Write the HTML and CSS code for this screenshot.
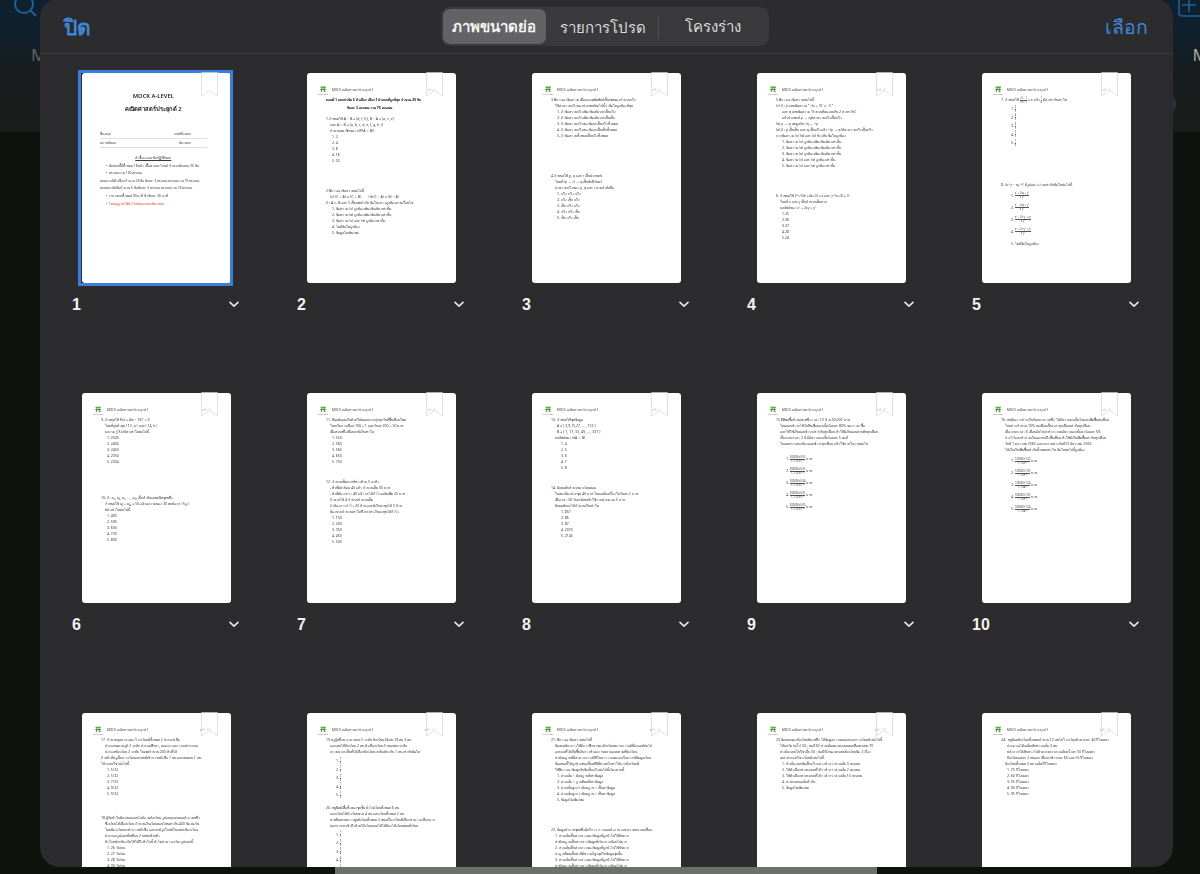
FILE: index.html
```html
<!DOCTYPE html>
<html lang="th">
<head>
    <meta charset="UTF-8">
    <meta name="viewport" content="width=device-width, initial-scale=1.0">
    <title>ภาพขนาดย่อ</title>
    <link rel="stylesheet" href="styles.css">
</head>
<body>
    <svg class="sprites" width="0" height="0">
        <symbol id="ribbon" viewBox="0 0 17 25"><path d="M0.5 0.5H16.5V24L8.5 18.5L0.5 24Z" fill="#fff" fill-opacity="0.55" stroke="#d4d4d4" stroke-width="0.7"/></symbol>
        <symbol id="logo" viewBox="0 0 12 8"><path d="M3 1.2H9.5M5 1.2L4 6.8M7.4 1.2V6.2L9 6.8M2.6 4H9.6" fill="none" stroke="#4e9a3a" stroke-width="1.3"/></symbol>
        <symbol id="chev" viewBox="0 0 10 7"><path d="M1 1.4L5 5.2L9 1.4" fill="none" stroke="#e8e8e8" stroke-width="1.6" stroke-linecap="round" stroke-linejoin="round"/></symbol>
    </svg>

    <div class="backdrop">
        <div class="back-top">
            <div class="back-icons">
                <svg class="back-search" width="40" height="20" viewBox="0 0 40 20"><circle cx="24" cy="4" r="9" fill="none" stroke="#1f5f94" stroke-width="2"/><path d="M30.5 10.5L36 16" stroke="#1f5f94" stroke-width="2"/></svg>
                <svg class="back-plus" width="22" height="20" viewBox="0 0 22 20"><rect x="1" y="-8" width="30" height="24" rx="3" fill="none" stroke="#1f5f94" stroke-width="1.6"/><path d="M11 -2V12M4 5H18" stroke="#1f5f94" stroke-width="1.6"/></svg>
            </div>
            <div class="back-tabs">
                <span class="back-m">M</span>
                <span class="back-m">M</span>
            </div>
        </div>
        <div class="back-bar"></div>
    </div>
    <div class="back-dot"></div>

    <div class="modal">
        <header class="modal-head">
            <a class="head-link head-link-left">ปิด</a>
            <div class="segments">
                <span class="seg seg-on">ภาพขนาดย่อ</span>
                <span class="seg seg-mid">รายการโปรด</span>
                <span class="seg seg-last">โครงร่าง</span>
            </div>
            <a class="head-link head-link-right">เลือก</a>
        </header>

        <div class="grid">
            <div class="cell">
                <div class="page page-first selected">
                    <svg class="ribbon"><use href="#ribbon"/></svg>
                    <div class="cover-title">MOCK A-LEVEL</div>
                    <div class="cover-title">คณิตศาสตร์ประยุกต์ 2</div>
                    <div class="form-line mt-14"><span>ชื่อ-สกุล</span><span>เลขที่นั่งสอบ</span></div>
                    <div class="form-line"><span>สถานที่สอบ</span><span>ห้องสอบ</span></div>
                    <div class="cover-note mt-6">คำชี้แจงและข้อปฏิบัติสอบ</div>
                    <div class="cover-ln in2">•&nbsp; ข้อสอบนี้มีทั้งหมด 18 หน้า เนื้อหาและโจทย์ จำนวนข้อสอบ 30 ข้อ</div>
                    <div class="cover-ln in2">•&nbsp; คะแนนรวม 100 คะแนน</div>
                    <div class="cover-ln">ตอนแรกมีตัวเลือกจำนวน 25 ข้อ ข้อละ 3 คะแนน คะแนนรวม 75 คะแนน</div>
                    <div class="cover-ln">ตอนสองอัตนัยจำนวน 5 ข้อ ข้อละ 5 คะแนน คะแนนรวม 25 คะแนน</div>
                    <div class="cover-ln in2">•&nbsp; เวลาสอบทั้งหมด 90 นาที ทำข้อละ 30 นาที</div>
                    <div class="cover-ln in2 red">•&nbsp; ไม่อนุญาตให้นำโจทย์ออกนอกห้องสอบ</div>
                </div>
                <div class="cell-foot"><span>1</span><svg class="chev"><use href="#chev"/></svg></div>
            </div>

            <div class="cell">
                <div class="page">
                    <svg class="ribbon"><use href="#ribbon"/></svg>
                    <div class="page-head"><div class="logo-box"><svg class="logo"><use href="#logo"/></svg><span class="logo-cap">MATH TALENT</span></div><span>MOCK คณิตศาสตร์ประยุกต์ 2</span><span class="pno">หน้า 1</span></div>
                    <div class="ln strong">ตอนที่ 1 แบบปรนัย 5 ตัวเลือก เลือก 1 คำตอบที่ถูกที่สุด จำนวน 25 ข้อ</div>
                    <div class="ln strong in4 mt-2">ข้อละ 3 คะแนน รวม 75 คะแนน</div>
                    <div class="ln mt-5">1.กำหนดให้ A − B = {d, f, h}, B − A = {a, c, e}</div>
                    <div class="ln in1">และ A ∩ B = {a, b, c, d, e, f, g, h, i}</div>
                    <div class="ln in1">จำนวนสมาชิกของ n(P(A ∩ B))</div>
                    <div class="ln in2">1. 2</div><div class="ln in2">2. 4</div><div class="ln in2">3. 8</div><div class="ln in2">4. 16</div><div class="ln in2">5. 32</div>
                    <div class="ln mt-24">2.พิจารณาข้อความต่อไปนี้</div>
                    <div class="ln in1">(ก) (C ∩ A) ∪ (C ∩ B)&nbsp;&nbsp;&nbsp;&nbsp;&nbsp;&nbsp;&nbsp;&nbsp;(ข) (C − A) ∪ (B − A)</div>
                    <div class="ln">ถ้า A ⊂ B และ C เป็นเซตจำกัด ข้อใดกล่าวถูกต้องตามเงื่อนไข</div>
                    <div class="ln in2">1. ข้อความ (ก) ถูกต้องเพียงข้อเดียวเท่านั้น</div>
                    <div class="ln in2">2. ข้อความ (ข) ถูกต้องเพียงข้อเดียวเท่านั้น</div>
                    <div class="ln in2">3. ข้อความ (ก) และ (ข) ถูกต้องเท่านั้น</div>
                    <div class="ln in2">4. ไม่มีข้อใดถูกต้อง</div>
                    <div class="ln in2">5. ข้อมูลไม่เพียงพอ</div>
                </div>
                <div class="cell-foot"><span>2</span><svg class="chev"><use href="#chev"/></svg></div>
            </div>

            <div class="cell">
                <div class="page">
                    <svg class="ribbon"><use href="#ribbon"/></svg>
                    <div class="page-head"><div class="logo-box"><svg class="logo"><use href="#logo"/></svg><span class="logo-cap">MATH TALENT</span></div><span>MOCK คณิตศาสตร์ประยุกต์ 2</span><span class="pno">หน้า 2</span></div>
                    <div class="ln">3.พิจารณาข้อความ เมื่อเอกภพสัมพัทธ์เป็นเซตของจำนวนจริง</div>
                    <div class="ln in1">ให้ค่าความจริงของประพจน์ต่อไปนี้ว่าข้อใดถูกต้องที่สุด</div>
                    <div class="ln in2">1. ถ้าข้อความจริงเพียงข้อเดียวจะเป็นจริง</div>
                    <div class="ln in2">2. ถ้าข้อความจริงเพียงข้อเดียวจะเป็นเท็จ</div>
                    <div class="ln in2">3. ถ้าข้อความจริงสองข้อจะเป็นจริงทั้งหมด</div>
                    <div class="ln in2">4. ถ้าข้อความจริงสองข้อจะเป็นเท็จทั้งหมด</div>
                    <div class="ln in2">5. ถ้าข้อความทั้งหมดเป็นจริงทั้งหมด</div>
                    <div class="ln mt-34">4.กำหนดให้ p, q และ r เป็นประพจน์</div>
                    <div class="ln in1">โดยที่ (p → r) ↔ q เป็นสัจนิรันดร์</div>
                    <div class="ln in1">ค่าความจริงของ p, q และ r ตามลำดับคือ</div>
                    <div class="ln in2">1. จริง จริง จริง</div><div class="ln in2">2. จริง เท็จ จริง</div><div class="ln in2">3. เท็จ จริง จริง</div><div class="ln in2">4. จริง จริง เท็จ</div><div class="ln in2">5. เท็จ จริง เท็จ</div>
                </div>
                <div class="cell-foot"><span>3</span><svg class="chev"><use href="#chev"/></svg></div>
            </div>

            <div class="cell">
                <div class="page">
                    <svg class="ribbon"><use href="#ribbon"/></svg>
                    <div class="page-head"><div class="logo-box"><svg class="logo"><use href="#logo"/></svg><span class="logo-cap">MATH TALENT</span></div><span>MOCK คณิตศาสตร์ประยุกต์ 2</span><span class="pno">หน้า 3</span></div>
                    <div class="ln">5.พิจารณาข้อความต่อไปนี้</div>
                    <div class="ln">(ก) ถ้า p แทนข้อความ “ √(x + 3)² = −3 ”</div>
                    <div class="ln in2">และ q แทนข้อความ “จำนวนที่สองลบกัน 2 ค่าเท่ากัน”</div>
                    <div class="ln in2">แล้วประพจน์ p → q มีค่าความจริงเป็นจริง</div>
                    <div class="ln">(ข) p ↔ q สมมูลกับ ~q ↔ ~p</div>
                    <div class="ln">(ค) ถ้า p เป็นเท็จ และ q เป็นจริงแล้ว ~(p → q) มีค่าความจริงเป็นจริง</div>
                    <div class="ln">จากข้อความ (ก) (ข) และ (ค) ข้างต้น ข้อใดถูกต้อง</div>
                    <div class="ln in2">1. ข้อความ (ก) ถูกต้องเพียงข้อเดียวเท่านั้น</div>
                    <div class="ln in2">2. ข้อความ (ข) ถูกต้องเพียงข้อเดียวเท่านั้น</div>
                    <div class="ln in2">3. ข้อความ (ค) ถูกต้องเพียงข้อเดียวเท่านั้น</div>
                    <div class="ln in2">4. ข้อความ (ก) และ (ข) ถูกต้องเท่านั้น</div>
                    <div class="ln in2">5. ข้อความ (ก) และ (ค) ถูกต้องเท่านั้น</div>
                    <div class="ln mt-24">6. กำหนดให้ 2^√(3x²+4x+3) = x และ y^(x+3) = 3³</div>
                    <div class="ln in1">โดยที่ x และ y เป็นจำนวนเต็มบวก</div>
                    <div class="ln in1">ผลลัพธ์ของ x² + 2xy + y²</div>
                    <div class="ln in2">1.25</div><div class="ln in2">2.36</div><div class="ln in2">3.37</div><div class="ln in2">4.28</div><div class="ln in2">5.24</div>
                </div>
                <div class="cell-foot"><span>4</span><svg class="chev"><use href="#chev"/></svg></div>
            </div>

            <div class="cell">
                <div class="page">
                    <svg class="ribbon"><use href="#ribbon"/></svg>
                    <div class="page-head"><div class="logo-box"><svg class="logo"><use href="#logo"/></svg><span class="logo-cap">MATH TALENT</span></div><span>MOCK คณิตศาสตร์ประยุกต์ 2</span><span class="pno">หน้า 4</span></div>
                    <div class="ln">7. กำหนดให้ <span class="frac"><span>√3 − 1</span><span>√3 + 1</span></span> = a แล้ว <span class="frac"><span>1</span><span>a</span></span> มีค่าเท่ากับเท่าใด</div>
                    <div class="ln-frac in3 mt-2">1. <span class="frac"><span>2</span><span>3</span></span></div>
                    <div class="ln-frac in3">2. <span class="frac"><span>4</span><span>5</span></span></div>
                    <div class="ln-frac in3">3. <span class="frac"><span>3</span><span>5</span></span></div>
                    <div class="ln-frac in3">4. <span class="frac"><span>2</span><span>5</span></span></div>
                    <div class="ln-frac in3">5. <span class="frac"><span>1</span><span>3</span></span></div>
                    <div class="ln mt-34">8. (x⁻¹y − xy⁻¹)² มีรูปอย่างง่ายเท่ากับข้อใดต่อไปนี้</div>
                    <div class="ln-sum in3 mt-2">1. <span class="frac"><span>x² + 2xy + y²</span><span>x²y²</span></span></div>
                    <div class="ln-sum in3">2. <span class="frac"><span>x² − 2xy + y²</span><span>x²y²</span></span></div>
                    <div class="ln-sum in3">3. <span class="frac"><span>x⁴ − 2x²y² + y⁴</span><span>x²y²</span></span></div>
                    <div class="ln-sum in3">4. <span class="frac"><span>x⁴ + 2x²y² + y⁴</span><span>x²y²</span></span></div>
                    <div class="ln-sum in3">5. ไม่มีข้อใดถูกต้อง</div>
                </div>
                <div class="cell-foot"><span>5</span><svg class="chev"><use href="#chev"/></svg></div>
            </div>

            <div class="cell">
                <div class="page">
                    <svg class="ribbon"><use href="#ribbon"/></svg>
                    <div class="page-head"><div class="logo-box"><svg class="logo"><use href="#logo"/></svg><span class="logo-cap">MATH TALENT</span></div><span>MOCK คณิตศาสตร์ประยุกต์ 2</span><span class="pno">หน้า 5</span></div>
                    <div class="ln">9. กำหนดให้ f(x) = 4(x − 16)² + 9</div>
                    <div class="ln in1">โดยที่จุดต่ำสุด ( 12, a ) และ ( 14, b )</div>
                    <div class="ln in1">ผลรวม ∑f(x) มีค่าเท่าใดต่อไปนี้</div>
                    <div class="ln in2">1. 2500</div><div class="ln in2">2. 2400</div><div class="ln in2">3. 2450</div><div class="ln in2">4. 2350</div><div class="ln in2">5. 2304</div>
                    <div class="ln mt-30">10. ถ้า a₁, a₂, a₃, ... , a₂₅ เป็นลำดับเลขคณิตชุดหนึ่ง</div>
                    <div class="ln in1">กำหนดให้ a₂ + a₂₄ = 50 แล้วผลรวมของ 30 พจน์แรก ( S₃₀ )</div>
                    <div class="ln in1">มีค่าเท่าใดต่อไปนี้</div>
                    <div class="ln in2">1. 495</div><div class="ln in2">2. 590</div><div class="ln in2">3. 690</div><div class="ln in2">4. 720</div><div class="ln in2">5. 800</div>
                </div>
                <div class="cell-foot"><span>6</span><svg class="chev"><use href="#chev"/></svg></div>
            </div>

            <div class="cell">
                <div class="page">
                    <svg class="ribbon"><use href="#ribbon"/></svg>
                    <div class="page-head"><div class="logo-box"><svg class="logo"><use href="#logo"/></svg><span class="logo-cap">MATH TALENT</span></div><span>MOCK คณิตศาสตร์ประยุกต์ 2</span><span class="pno">หน้า 6</span></div>
                    <div class="ln">11. นิมนต์ออมเงินด้วยวิธีหยอดกระปุกทุกวันที่ขึ้นเดือนใหม่</div>
                    <div class="ln in1">โดยเริ่มจากเดือน 100 + 1 และวันละ 200 + 50 บาท</div>
                    <div class="ln in1">เมื่อครบหนึ่งเดือนจะมีเงินเท่าใด</div>
                    <div class="ln in2">1. 550</div><div class="ln in2">2. 560</div><div class="ln in2">3. 560</div><div class="ln in2">4. 650</div><div class="ln in2">5. 750</div>
                    <div class="ln mt-14">12. จำนวนเต็มบวกที่หารด้วย 3 ลงตัว</div>
                    <div class="ln in1">- ตัวที่มีค่าน้อย 40 แล้ว จำนวนเต็ม 30 บาท</div>
                    <div class="ln in1">- ตัวที่มีมากกว่า 40 แล้ว จะได้กำไรเฉลี่ยเพิ่ม 20 บาท</div>
                    <div class="ln in1">ถ้าขายได้ 4 จำนวนจำนวนเต็ม</div>
                    <div class="ln in1">ถ้าต้องการกำไร 20 ล้าน และมีเงินลงทุนได้ 3 ล้าน</div>
                    <div class="ln in1">ต้องขายจำนวนเท่าใดจึงจะเท่าเงินลงทุนได้กำไร</div>
                    <div class="ln in2">1. 150</div><div class="ln in2">2. 200</div><div class="ln in2">3. 350</div><div class="ln in2">4. 450</div><div class="ln in2">5. 500</div>
                </div>
                <div class="cell-foot"><span>7</span><svg class="chev"><use href="#chev"/></svg></div>
            </div>

            <div class="cell">
                <div class="page">
                    <svg class="ribbon"><use href="#ribbon"/></svg>
                    <div class="page-head"><div class="logo-box"><svg class="logo"><use href="#logo"/></svg><span class="logo-cap">MATH TALENT</span></div><span>MOCK คณิตศาสตร์ประยุกต์ 2</span><span class="pno">หน้า 7</span></div>
                    <div class="ln">13. กำหนดให้ชุดข้อมูล</div>
                    <div class="ln in2">A = { 3,9,15,27, ... , 153 }</div>
                    <div class="ln in2">B = { 1, 17, 33, 49, ... , 337 }</div>
                    <div class="ln in1">ผลลัพธ์ของ n(A ∩ B)</div>
                    <div class="ln in3">1. 4</div><div class="ln in3">2. 5</div><div class="ln in3">3. 6</div><div class="ln in3">4. 7</div><div class="ln in3">5. 8</div>
                    <div class="ln mt-14">14. มัธยมต้นจำนวนมาเรียนคอม</div>
                    <div class="ln in1">ในสองห้องประชุม 40 บาท โดยเฉลี่ยเครื่องในวันละ 2 บาท</div>
                    <div class="ln in1">เมื่อเวลา 30 วันจะมีคนเข้าใช้งานประมาณ 5 บาท</div>
                    <div class="ln in1">มัธยมต้นจะได้จำนวนเงินเท่าใด</div>
                    <div class="ln in3">1. 857</div><div class="ln in3">2. 86</div><div class="ln in3">3. 87</div><div class="ln in3">4. 2070</div><div class="ln in3">5. 2145</div>
                </div>
                <div class="cell-foot"><span>8</span><svg class="chev"><use href="#chev"/></svg></div>
            </div>

            <div class="cell">
                <div class="page">
                    <svg class="ribbon"><use href="#ribbon"/></svg>
                    <div class="page-head"><div class="logo-box"><svg class="logo"><use href="#logo"/></svg><span class="logo-cap">MATH TALENT</span></div><span>MOCK คณิตศาสตร์ประยุกต์ 2</span><span class="pno">หน้า 8</span></div>
                    <div class="ln">15.นิติพลซื้อบ้านแห่งหนึ่งราคา 10 ล้าน 50,000 บาท</div>
                    <div class="ln in1">โดยผ่อนชำระได้รับสินเชื่อดอกเบี้ยร้อยละ 80% ของราคาซื้อ</div>
                    <div class="ln in1">และให้ใช้เงินผ่อนชำระเท่าๆกันทุกเดือน ทำให้มีเงินผ่อนส่วนต้นทุกเดือน</div>
                    <div class="ln in1">เป็นระยะเวลา 2 ปี มีอัตราดอกเบี้ยร้อยละ 5 ต่อปี</div>
                    <div class="ln in1">ในแต่ละงวดจะต้องผ่อนชำระทุกเดือน แล้วใช้จ่ายในงวดต่อไป</div>
                    <div class="ln-sum in3 mt-6">1. <span class="frac"><span>500000×0.05</span><span>1−1.0125⁻²⁴</span></span> บาท</div>
                    <div class="ln-sum in3">2. <span class="frac"><span>500000×0.05</span><span>1−1.0125⁻²⁴</span></span> บาท</div>
                    <div class="ln-sum in3">3. <span class="frac"><span>500000×0.04</span><span>1−1.0125⁻²⁴</span></span> บาท</div>
                    <div class="ln-sum in3">4. <span class="frac"><span>500000×0.05</span><span>1−1.0125⁻¹²</span></span> บาท</div>
                    <div class="ln-sum in3">5. <span class="frac"><span>500000×0.05</span><span>1−1.0125⁻¹²</span></span> บาท</div>
                </div>
                <div class="cell-foot"><span>9</span><svg class="chev"><use href="#chev"/></svg></div>
            </div>

            <div class="cell">
                <div class="page">
                    <svg class="ribbon"><use href="#ribbon"/></svg>
                    <div class="page-head"><div class="logo-box"><svg class="logo"><use href="#logo"/></svg><span class="logo-cap">MATH TALENT</span></div><span>MOCK คณิตศาสตร์ประยุกต์ 2</span><span class="pno">หน้า 9</span></div>
                    <div class="ln">16. หนมันเงาะฝากเงินกับธนาคารหนึ่ง ได้อัตราดอกเบี้ยร้อยละเพิ่มขึ้นต่อเดือน</div>
                    <div class="ln in1">โดยฝากจำนวน 10% ต่อเดือนเป็นเวลาทุกเดือนเท่ากันทุกเดือน</div>
                    <div class="ln in1">เมื่อระยะเวลา 6 เดือนถัดไปจะทำการลดอัตราดอกเบี้ยลงร้อยละ 5%</div>
                    <div class="ln in1">ฝากไว้และทำจ่ายเงินออกจนถึงสิ้นเดือน ทำให้มีเงินเพิ่มขึ้นเท่ากันทุกเดือน</div>
                    <div class="ln in1">วันที่ 1 มกราคม 2563 และจะจ่ายต่างกันที่ 31 ธันวาคม 2563</div>
                    <div class="ln in1">ได้เงินเงินเพิ่มขึ้นเท่ากันทั้งหมดเท่าใด ข้อใดต่อไปนี้ถูกต้อง</div>
                    <div class="ln-sum in3 mt-2">1. <span class="frac"><span>120000×1.05</span><span>1−1.05⁻¹²</span></span> บาท</div>
                    <div class="ln-sum in3">2. <span class="frac"><span>120000×1.05</span><span>1−1.05⁻¹²</span></span> บาท</div>
                    <div class="ln-sum in3">3. <span class="frac"><span>120000×1.04</span><span>1−1.04⁻¹²</span></span> บาท</div>
                    <div class="ln-sum in3">4. <span class="frac"><span>100000×1.05</span><span>1−1.05⁻¹²</span></span> บาท</div>
                    <div class="ln-sum in3">5. <span class="frac"><span>100000×1.04</span><span>1−1.04⁻¹²</span></span> บาท</div>
                </div>
                <div class="cell-foot"><span>10</span><svg class="chev"><use href="#chev"/></svg></div>
            </div>

            <div class="cell">
                <div class="page">
                    <svg class="ribbon"><use href="#ribbon"/></svg>
                    <div class="page-head"><div class="logo-box"><svg class="logo"><use href="#logo"/></svg><span class="logo-cap">MATH TALENT</span></div><span>MOCK คณิตศาสตร์ประยุกต์ 2</span><span class="pno">หน้า 10</span></div>
                    <div class="ln">17. จำนวนบุคลากรของโรงเรียนมีทั้งหมด 2 ประเภท คือ</div>
                    <div class="ln in1">ประเภทของครูมี 2 ระดับ ประถมศึกษา, คณะกรรมการ ผลประกอบ</div>
                    <div class="ln in1">ประเภทนักเรียน 2 ระดับ ในเขตจำนวน 200 ตัวที่ได้</div>
                    <div class="ln">ถ้าหน้าที่ครูเป็นการเรียนและคนที่เข้าจากหนังสือ 1 คน และคนสอน 1 คน</div>
                    <div class="ln">ได้ระบบวิชาต่อไปนี้</div>
                    <div class="ln in2">1. 5/32</div><div class="ln in2">2. 5/32</div><div class="ln in2">3. 7/32</div><div class="ln in2">4. 9/32</div><div class="ln in2">5. 9/32</div>
                    <div class="ln mt-18">18.ผู้จัดทำในห้องสอบออนไลน์ถามนักเรียน รูปแบบและตอบคำถามหนึ่ง</div>
                    <div class="ln in1">ซึ่งเรียนได้เลือกเรียน จำนวนเงินเรียนตอนไหนเท่ากัน 400 ข้อ ต่อวัน</div>
                    <div class="ln in1">โดยห้องเรียนจะทำการหนังสือ และจะมีรูปโจทย์ในแต่ละห้องเรียน</div>
                    <div class="ln in1">ประกอบรูปแบบที่เหมือน 2 บทต่อหัวหน้า</div>
                    <div class="ln in1">ตัวโจทย์จะต้องจัดให้ได้ถึงหัวใจนี้ ทำไม่สามารถเรียงรูปแบบนี้</div>
                    <div class="ln in2">1. 26 วัน/บน</div><div class="ln in2">2. 27 วัน/บน</div><div class="ln in2">3. 28 วัน/บน</div><div class="ln in2">4. 30 วัน/บน</div>
                </div>
                <div class="cell-foot"><span>11</span><svg class="chev"><use href="#chev"/></svg></div>
            </div>

            <div class="cell">
                <div class="page">
                    <svg class="ribbon"><use href="#ribbon"/></svg>
                    <div class="page-head"><div class="logo-box"><svg class="logo"><use href="#logo"/></svg><span class="logo-cap">MATH TALENT</span></div><span>MOCK คณิตศาสตร์ประยุกต์ 2</span><span class="pno">หน้า 11</span></div>
                    <div class="ln">19.ครูผู้หนึ่งมาเวลาสอน 3 ระดับ นักเรียน 34 คน 56 คน 3 คน</div>
                    <div class="ln in1">ออกเล่นได้นักเรียน 2 คน ตัวเลือกเรียน 3 คนแต่ละระดับ</div>
                    <div class="ln in1">ความน่าจะเป็นที่ได้เลือกนักเรียนระดับเดียวกัน 1 คน เท่ากับข้อใด</div>
                    <div class="ln-frac in3 mt-2">1. <span class="frac"><span>1</span><span>2</span></span></div>
                    <div class="ln-frac in3">2. <span class="frac"><span>1</span><span>3</span></span></div>
                    <div class="ln-frac in3">3. <span class="frac"><span>2</span><span>3</span></span></div>
                    <div class="ln-frac in3">4. <span class="frac"><span>1</span><span>4</span></span></div>
                    <div class="ln-frac in3">5. <span class="frac"><span>1</span><span>5</span></span></div>
                    <div class="ln mt-5">20. หนูนิดมีเสื้อทั้งสองชุดชั้น นำไปเรียนทั้งหมด 6 คน</div>
                    <div class="ln in1">ออกเรียนได้นำเรียนขาด 4 คน และเรียนทั้งหมด 2 คน</div>
                    <div class="ln in1">ค่าหยิบสะสมการศูนย์เรียนทั้งหมด 3 คนเครื่องเรียนที่เลือกสามารถเลือกจาก</div>
                    <div class="ln in1">นอกจากจะเข้าถึงด้วยวิธีเรียนแบบได้ได้ต้องได้เรียนหมดที่เรียน</div>
                    <div class="ln-frac in3 mt-2">1. <span class="frac"><span>1</span><span>2</span></span></div>
                    <div class="ln-frac in3">2. <span class="frac"><span>2</span><span>3</span></span></div>
                    <div class="ln-frac in3">3. <span class="frac"><span>3</span><span>4</span></span></div>
                    <div class="ln-frac in3">4. <span class="frac"><span>4</span><span>5</span></span></div>
                    <div class="ln-frac in3">5. <span class="frac"><span>5</span><span>6</span></span></div>
                </div>
                <div class="cell-foot"><span>12</span><svg class="chev"><use href="#chev"/></svg></div>
            </div>

            <div class="cell">
                <div class="page">
                    <svg class="ribbon"><use href="#ribbon"/></svg>
                    <div class="page-head"><div class="logo-box"><svg class="logo"><use href="#logo"/></svg><span class="logo-cap">MATH TALENT</span></div><span>MOCK คณิตศาสตร์ประยุกต์ 2</span><span class="pno">หน้า 12</span></div>
                    <div class="ln">21. พิจารณาข้อความต่อไปนี้</div>
                    <div class="ln in1">ข้อสอบต้องการให้มีการศึกษาของนักเรียนสถานการณ์ที่มีเกณฑ์ต่อไป</div>
                    <div class="ln in1">และผลที่ได้เกิดขึ้นกับการทำผลงานหลายแบบตามที่นักเรียน</div>
                    <div class="ln in1">ค่ามัธยฐานที่มีค่ามากกว่าสถิติในตารางแสดงผลวิเคราะห์ข้อมูลเรียน</div>
                    <div class="ln in1">ข้อเสนอนี้ได้ถูกนำเสนอเป็นสถิติที่น่าสนใจหาได้จากนักเรียนที่</div>
                    <div class="ln in1">ให้พิจารณาข้อมูลกับข้อเท็จจริงต่อไปนี้เรียงตามนี้</div>
                    <div class="ln in2">1. ค่าเฉลี่ย &lt; มัธยฐานที่เท่าข้อมูล</div>
                    <div class="ln in2">2. ค่าเฉลี่ย &lt; ฐานนิยมที่เท่าข้อมูล</div>
                    <div class="ln in2">3. ค่าเฉลี่ยสูงกว่ามัธยฐาน &lt; เป็นค่าข้อมูล</div>
                    <div class="ln in2">4. ค่าเฉลี่ยสูงกว่ามัธยฐาน &lt; เป็นค่าข้อมูล</div>
                    <div class="ln in2">5. ข้อมูลไม่เพียงพอ</div>
                    <div class="ln mt-24">22. ข้อมูลคำถามชุดหนึ่งมีบริการ การตอบคำถาม และความคลาดเคลื่อน</div>
                    <div class="ln in1">1. ค่าเฉลี่ยเป็นค่ากลางของข้อมูลที่ถูกนำไปใช้กันมาก</div>
                    <div class="ln in1">ค่ามัธยฐานเป็นค่ากลางข้อมูลที่เรียงจากน้อยไปมาก</div>
                    <div class="ln in1">2. ค่าเฉลี่ยเป็นค่ากลางของข้อมูลที่ถูกนำไปใช้กันมาก</div>
                    <div class="ln in1">ค่าฐานนิยมเป็นค่าที่มีความถี่สูงสุดในข้อมูลชุดนั้น</div>
                    <div class="ln in1">3. ค่าเฉลี่ยเป็นค่ากลางของข้อมูลที่ถูกนำไปใช้กันมาก</div>
                    <div class="ln in1">ค่ามัธยฐานเป็นค่ากลางข้อมูลที่เรียงจากน้อยไปมาก</div>
                </div>
                <div class="cell-foot"><span>13</span><svg class="chev"><use href="#chev"/></svg></div>
            </div>

            <div class="cell">
                <div class="page">
                    <svg class="ribbon"><use href="#ribbon"/></svg>
                    <div class="page-head"><div class="logo-box"><svg class="logo"><use href="#logo"/></svg><span class="logo-cap">MATH TALENT</span></div><span>MOCK คณิตศาสตร์ประยุกต์ 2</span><span class="pno">หน้า 13</span></div>
                    <div class="ln">23.ข้อสอบของนักเรียนห้องหนึ่ง ได้ข้อมูลการสอบและผลการเรียนดังต่อไปนี้</div>
                    <div class="ln in1">ได้ผลวัด (ครั้ง) 50 ; ต่อปี 30 ค่าเฉลี่ยของคะแนนสอบคือ คะแนน 70</div>
                    <div class="ln in1">ค่าเบี่ยงเบนในวิชาอื่น 50 ; ต่อปี 60 ของคะแนนนักเรียนข้อ 2 เรื่อง</div>
                    <div class="ln in1">เหล่าประถมวิชาเรียนดังต่อไปนี้</div>
                    <div class="ln in2">1. นำเบี่ยงเบนข้อเท็จจริงอย่างต่ำกว่าค่าเฉลี่ย 3 คะแนน</div>
                    <div class="ln in2">2. ให้ตัวเลือกค่าคะแนนที่ได้ว่าต่ำกว่าค่าเฉลี่ย 2 คะแนน</div>
                    <div class="ln in2">3. ให้ตัวเลือกค่าคะแนนที่ได้ว่าต่ำกว่าค่าเฉลี่ย 10 คะแนน</div>
                    <div class="ln in2">4. ค่าคะแนนเฉลี่ยต่ำกัน</div>
                    <div class="ln in2">5. ข้อมูลไม่เพียงพอ</div>
                </div>
                <div class="cell-foot"><span>14</span><svg class="chev"><use href="#chev"/></svg></div>
            </div>

            <div class="cell">
                <div class="page">
                    <svg class="ribbon"><use href="#ribbon"/></svg>
                    <div class="page-head"><div class="logo-box"><svg class="logo"><use href="#logo"/></svg><span class="logo-cap">MATH TALENT</span></div><span>MOCK คณิตศาสตร์ประยุกต์ 2</span><span class="pno">หน้า 14</span></div>
                    <div class="ln">24.&nbsp; หนูน้อยนักเรียนทั้งหมดจำนวน 12 คน ไปโรงเรียนด้วยระยะ 40 กิโลเมตร</div>
                    <div class="ln in2">ประมาณได้เฉลี่ยเส้นทางเฉลี่ย 3 คน</div>
                    <div class="ln in2">หลังจากได้เดินทางไปด้วยระยะเวลาเฉลี่ยครั้งละ 50 กิโลเมตร</div>
                    <div class="ln in2">นักเรียนแต่ละ 2 คนและ เมื่อจะเข้าระยะ 60 และ 55 กิโลเมตร</div>
                    <div class="ln in1">นักเรียนทั้งหมด 3 คน เฉลี่ยกี่กิโลเมตร</div>
                    <div class="ln in2">1. 75 กิโลเมตร</div><div class="ln in2">2. 60 กิโลเมตร</div><div class="ln in2">3. 55 กิโลเมตร</div><div class="ln in2">4. 90 กิโลเมตร</div><div class="ln in2">5. 95 กิโลเมตร</div>
                </div>
                <div class="cell-foot"><span>15</span><svg class="chev"><use href="#chev"/></svg></div>
            </div>
        </div>
    </div>
</body>
</html>
```

FILE: styles.css
```css
* {
    box-sizing: border-box;
}
html, body {
    margin: 0;
    padding: 0;
    height: 874px;
    overflow: hidden;
}
body {
    position: relative;
    background: #10120e;
    font-family: "Noto Sans", "Liberation Sans", "DejaVu Sans", sans-serif;
}
.sprites {
    position: absolute;
}

/* app behind the sheet */
.backdrop {
    height: 874px;
    display: flex;
    flex-direction: column;
    justify-content: space-between;
}
.back-top {
    height: 132px;
    background: linear-gradient(#0f2030 0, #10202c 36px, #181c1e 70px, #1b1d1b 132px);
}
.back-icons {
    height: 38px;
    display: flex;
    justify-content: space-between;
}
.back-search, .back-plus {
    display: block;
}
.back-tabs {
    padding: 5px 0 0 31px;
    display: flex;
    justify-content: space-between;
}
.back-m {
    color: #5f6467;
    font-size: 17px;
    line-height: 24px;
}
.back-m:last-child {
    margin-right: -8px;
    color: #a6a8a8;
}
.back-bar {
    height: 8px;
    width: 542px;
    margin-left: 335px;
    background: #6e706b;
}
.back-dot {
    position: absolute;
    top: 95px;
    left: 1164px;
    width: 12px;
    height: 18px;
    border-radius: 50%;
    background: #24364c;
}

/* sheet */
.modal {
    position: absolute;
    left: 40px;
    top: -2px;
    width: 1133px;
    height: 869px;
    background: #2c2c2e;
    border-radius: 20px;
    overflow: hidden;
    display: flex;
    flex-direction: column;
}
.modal-head {
    height: 56px;
    flex: none;
    padding: 2px 25px 0 24px;
    border-bottom: 1px solid #3c3c3e;
    display: flex;
    justify-content: space-between;
    align-items: center;
}
.head-link {
    color: #3f86d8;
    line-height: 28px;
}
.head-link-left {
    font-size: 21px;
    font-weight: 700;
}
.head-link-right {
    font-size: 19.5px;
}
.segments {
    width: 328px;
    height: 39px;
    margin: 0 0 0 13px;
    padding: 2px;
    background: #3a3a3c;
    border-radius: 9px;
    display: flex;
    align-items: center;
}
.seg {
    color: #dcdcdc;
    font-size: 15px;
    text-align: center;
}
.seg-on {
    width: 103px;
    height: 35px;
    line-height: 35px;
    background: #636366;
    border-radius: 7px;
    color: #f2f2f2;
    font-weight: 700;
}
.seg-mid {
    width: 113px;
    padding-left: 3px;
    border-right: 1px solid #525254;
    line-height: 22px;
}
.seg-last {
    flex: 1;
}

/* thumbnails */
.grid {
    flex: 1;
    padding: 19px 0 0 32px;
    display: grid;
    grid-template-columns: repeat(5, 168px);
    grid-auto-rows: 320px;
    column-gap: 57px;
    overflow: hidden;
}
.cell {
    min-width: 0;
}
.page {
    position: relative;
    width: 148.5px;
    height: 209.5px;
    margin-left: 10px;
    padding: 0 4px 0 19px;
    background: #fff;
    border-radius: 3px;
    color: #3a3a3a;
    font-size: 3.5px;
    filter: blur(0.25px);
}
.selected::before {
    content: "";
    position: absolute;
    top: -3.5px;
    left: -4px;
    right: -2.5px;
    bottom: -3.5px;
    border: 3.5px solid #3a7fdc;
}
.ribbon {
    position: absolute;
    top: -1px;
    right: 13px;
    width: 17px;
    height: 25px;
}
.page-head {
    height: 24px;
    margin-left: -9px;
    padding-top: 10px;
    display: flex;
    align-items: center;
    gap: 3px;
    font-size: 3px;
    white-space: nowrap;
}
.logo-box {
    width: 12px;
    display: flex;
    flex-direction: column;
    align-items: center;
}
.logo {
    width: 10px;
    height: 7px;
    flex: none;
}
.logo-cap {
    font-size: 1.6px;
    line-height: 2px;
    color: #4b6b44;
}
.pno {
    margin-left: auto;
    margin-right: 16px;
    color: #777;
}
.ln, .ln-frac, .ln-sum {
    white-space: nowrap;
    line-height: 6px;
    height: 6px;
}
.ln-frac {
    height: 8.5px;
    line-height: 8.5px;
}
.ln-sum {
    height: 12px;
    line-height: 12px;
}
.frac {
    display: inline-flex;
    flex-direction: column;
    align-items: center;
    vertical-align: middle;
    font-size: 2.6px;
    line-height: 3px;
}
.frac span:first-child {
    border-bottom: 0.4px solid #555;
}
.strong {
    color: #111;
    font-weight: 700;
}
.in1 { margin-left: 4px; }
.in2 { margin-left: 6px; }
.in3 { margin-left: 10px; }
.in4 { margin-left: 21px; }
.mt-2 { margin-top: 2px; }
.mt-5 { margin-top: 5px; }
.mt-6 { margin-top: 6px; }
.mt-14 { margin-top: 14px; }
.mt-18 { margin-top: 18px; }
.mt-24 { margin-top: 24px; }
.mt-30 { margin-top: 30px; }
.mt-34 { margin-top: 34px; }

/* cover page */
.page-first {
    padding: 17px 24px 0 18px;
}
.cover-title {
    height: 13px;
    line-height: 13px;
    text-align: center;
    color: #1a1a1a;
    font-size: 5.8px;
    font-weight: 600;
}
.form-line {
    height: 9px;
    line-height: 9px;
    border-bottom: 1px solid #e0e0e0;
    display: flex;
    justify-content: space-between;
    padding-right: 16px;
    font-size: 3.2px;
}
.cover-note {
    height: 7.6px;
    line-height: 7.6px;
    text-align: center;
    text-decoration: underline;
    font-size: 3.3px;
}
.cover-ln {
    height: 7.6px;
    line-height: 7.6px;
    white-space: nowrap;
    font-size: 3.3px;
}
.red {
    color: #d8403c;
}

.cell-foot {
    height: 20px;
    margin-top: 12px;
    display: flex;
    justify-content: space-between;
    align-items: center;
    color: #f2f2f2;
    font-size: 16px;
    font-weight: 700;
    font-family: "Liberation Sans", sans-serif;
}
.chev {
    width: 10px;
    height: 7px;
    margin-right: 1px;
}
```
